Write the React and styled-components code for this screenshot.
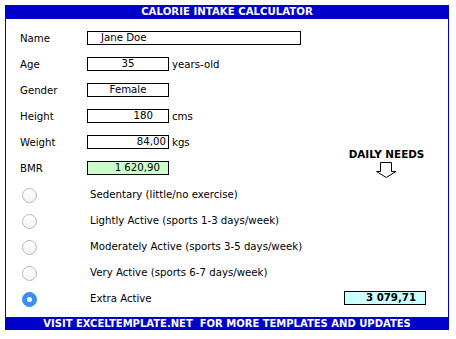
import React from 'react';
import styled, { createGlobalStyle } from 'styled-components';

const BLUE = '#0000cc';

const GlobalStyle = createGlobalStyle`
  html, body {
    margin: 0;
    padding: 0;
    background: #ffffff;
  }
  body {
    font-family: 'DejaVu Sans', Verdana, sans-serif;
    color: #000000;
  }
`;

const Page = styled.div`
  padding: 5px 0 0 5px;
`;

const Frame = styled.div`
  width: 444px;
  box-sizing: border-box;
  border-left: 1px solid ${BLUE};
  border-right: 1px solid ${BLUE};
  display: flex;
  flex-direction: column;
`;

const Bar = styled.div`
  height: ${p => p.$height}px;
  margin: 0 -1px;
  background: ${BLUE};
  color: #ffffff;
  font-weight: bold;
  font-size: ${p => p.$size}px;
  line-height: ${p => p.$height}px;
  text-align: center;
  white-space: pre;
`;

const Body = styled.div`
  display: grid;
  grid-template-columns: 67px 82px 1fr 82px;
  grid-auto-rows: 26px;
  padding: 6px 22px 6px 14px;
  font-size: 10.2px;
`;

const Label = styled.div`
  grid-column: 1;
  display: flex;
  align-items: center;
`;

const Field = styled.div`
  grid-column: ${p => p.$col || 'auto'};
  align-self: center;
  width: ${p => p.$width || 82}px;
  height: 14px;
  box-sizing: border-box;
  border: 1px solid #000000;
  background: ${p => p.$bg || '#ffffff'};
  font-weight: ${p => (p.$bold ? 'bold' : 'normal')};
  line-height: 12px;
  text-align: ${p => p.$align || 'left'};
  padding: 0 ${p => p.$pr || 0}px 0 ${p => p.$pl || 0}px;
`;

const Unit = styled.div`
  grid-column: 3;
  display: flex;
  align-items: center;
  padding-left: 3px;
`;

const RadioCell = styled.div`
  grid-column: 1;
  display: flex;
  align-items: center;
  padding-left: 2px;
`;

const Radio = styled.span`
  width: 15px;
  height: 15px;
  box-sizing: border-box;
  border-radius: 50%;
  display: flex;
  align-items: center;
  justify-content: center;
  margin-top: ${p => (p.$checked ? 3 : 2)}px;
  border: 1px solid ${p => (p.$checked ? '#3a8bea' : '#b8b8b8')};
  background: ${p =>
    p.$checked ? '#3a8eef' : 'linear-gradient(#ffffff, #f2f2f2)'};

  &::after {
    content: '';
    display: ${p => (p.$checked ? 'block' : 'none')};
    width: 5px;
    height: 5px;
    border-radius: 50%;
    background: #ffffff;
  }
`;

const OptionLabel = styled.div`
  grid-column: 2 / span 2;
  display: flex;
  align-items: center;
  padding-left: 3px;
  white-space: nowrap;
`;

const DailyNeeds = styled.div`
  grid-column: 4;
  grid-row: 5 / span 2;
  display: flex;
  flex-direction: column;
  justify-content: flex-end;
  align-items: center;
  gap: 2px;
  padding: 0 0 3px 3px;
`;

const NeedsTitle = styled.div`
  font-weight: bold;
  font-size: 10.4px;
  line-height: 12px;
  white-space: nowrap;
`;

const ResultCell = styled.div`
  grid-column: 4;
  display: flex;
  align-items: center;
`;

const DownArrow = () => (
  <svg width="21" height="16" viewBox="0 0 21 16">
    <path
      d="M4.5 0.5 H15.5 V9.5 H20 L10.25 15.5 L0.5 9.5 H4.5 Z"
      fill="#ffffff"
      stroke="#000000"
      strokeWidth="1"
    />
  </svg>
);

const inputs = [
  { label: 'Name', value: 'Jane Doe', width: 214, col: '2 / span 2', pl: 13 },
  { label: 'Age', value: '35', align: 'center', unit: 'years-old' },
  { label: 'Gender', value: 'Female', align: 'center' },
  { label: 'Height', value: '180', align: 'right', pr: 15, unit: 'cms' },
  { label: 'Weight', value: '84,00', align: 'right', pr: 2, unit: 'kgs' },
  { label: 'BMR', value: '1 620,90', align: 'right', pr: 8, bg: '#ccffcc' },
];

const levels = [
  'Sedentary (little/no exercise)',
  'Lightly Active (sports 1-3 days/week)',
  'Moderately Active (sports 3-5 days/week)',
  'Very Active (sports 6-7 days/week)',
  'Extra Active',
];

export default function App() {
  const selected = 4;

  return (
    <Page>
      <GlobalStyle />
      <Frame>
        <Bar $height={14} $size={10.2}>CALORIE INTAKE CALCULATOR</Bar>
        <Body>
          {inputs.map(row => (
            <React.Fragment key={row.label}>
              <Label>{row.label}</Label>
              <Field
                $col={row.col || 2}
                $width={row.width}
                $align={row.align}
                $pl={row.pl}
                $pr={row.pr}
                $bg={row.bg}
              >
                {row.value}
              </Field>
              {row.unit && <Unit>{row.unit}</Unit>}
            </React.Fragment>
          ))}
          <DailyNeeds>
            <NeedsTitle>DAILY NEEDS</NeedsTitle>
            <DownArrow />
          </DailyNeeds>
          {levels.map((level, i) => (
            <React.Fragment key={level}>
              <RadioCell>
                <Radio $checked={i === selected} />
              </RadioCell>
              <OptionLabel>{level}</OptionLabel>
              {i === selected && (
                <ResultCell>
                  <Field $align="right" $pr={9} $bg="#ccffff" $bold>
                    3 079,71
                  </Field>
                </ResultCell>
              )}
            </React.Fragment>
          ))}
        </Body>
        <Bar $height={13} $size={10}>
          {'VISIT EXCELTEMPLATE.NET  FOR MORE TEMPLATES AND UPDATES'}
        </Bar>
      </Frame>
    </Page>
  );
}
